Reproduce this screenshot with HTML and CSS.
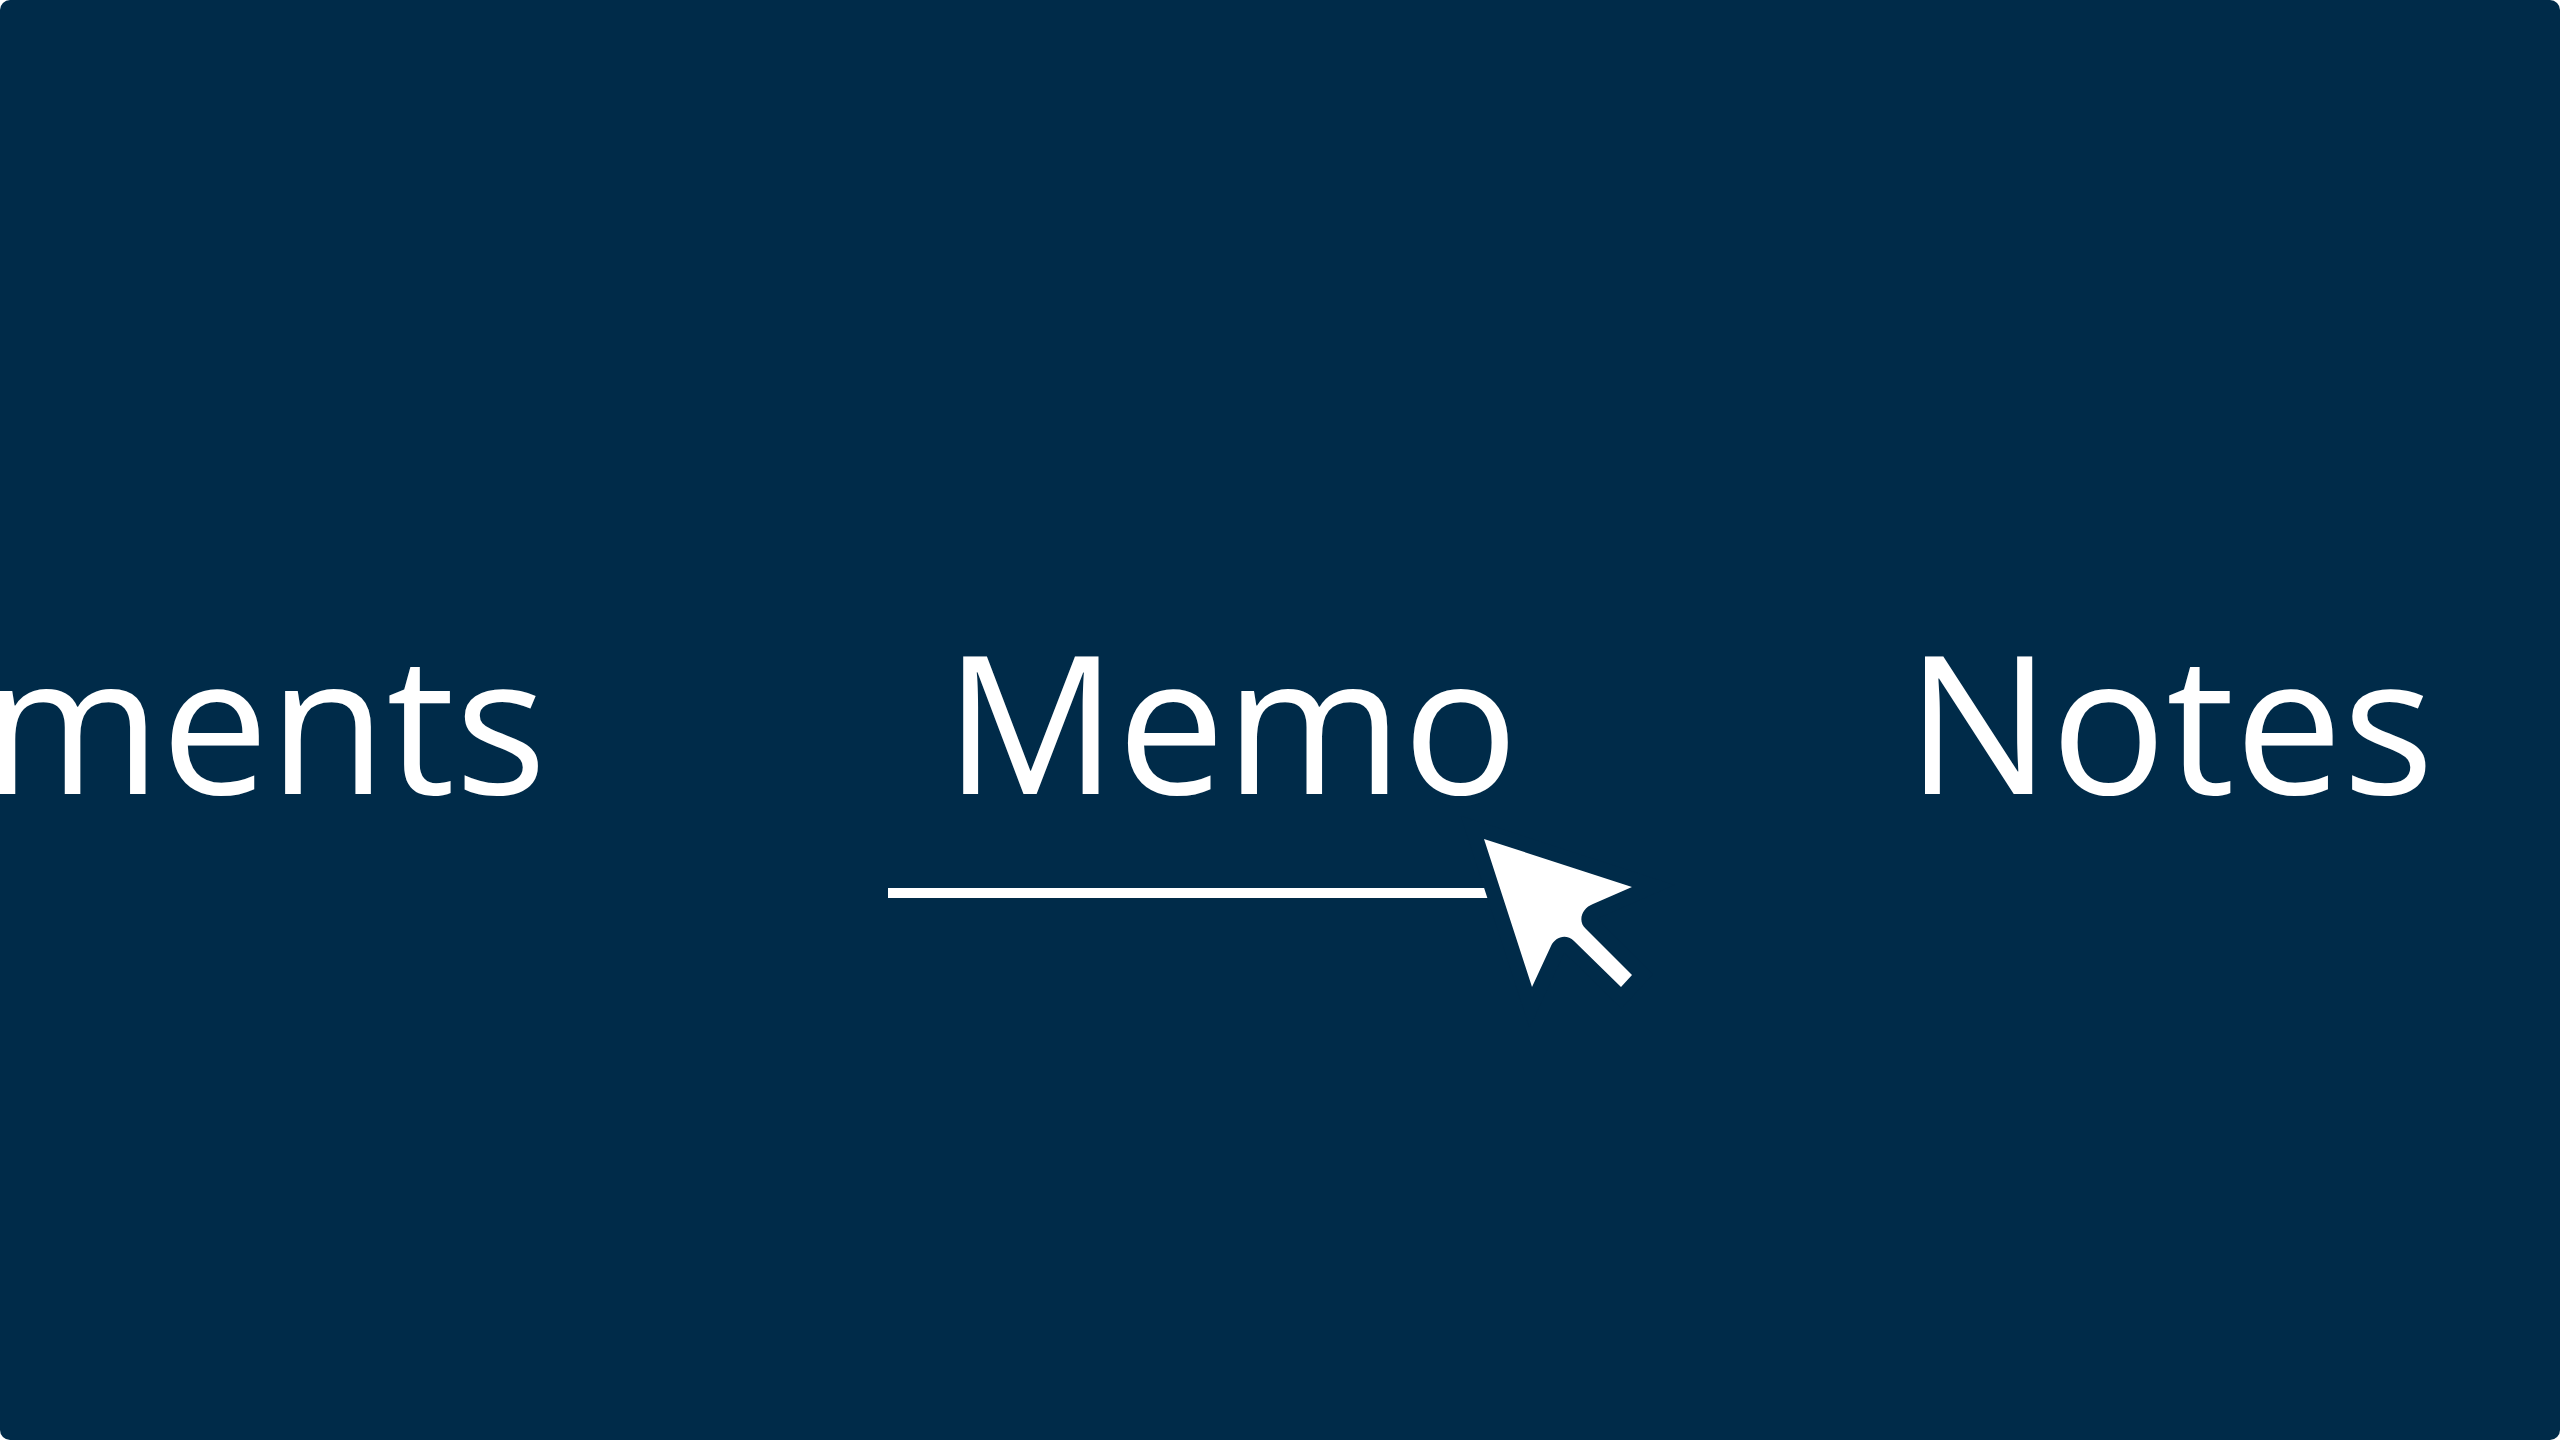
FILE: index.html
```html
<!DOCTYPE html>
<html lang="en">
<head>
    <meta charset="UTF-8">
    <meta name="viewport" content="width=device-width, initial-scale=1.0">
    <title>Memo</title>
    <link rel="stylesheet" href="styles.css">
</head>
<body>
    <nav class="tabs">
        <a href="#" class="tab previous">Documents</a>
        <a href="#" class="tab active" aria-current="page">Memo
            <svg class="cursor" viewBox="0 0 148 148" aria-hidden="true">
                <path d="M0 0 L148 48 L109 65 C98 69 93 82 102 90 L148 136 L137 148 L90 102 C82 94 71 98 67 107 L48 148 Z"/>
            </svg>
        </a>
        <a href="#" class="tab">Notes</a>
    </nav>
</body>
</html>
```

FILE: styles.css
```css
html {
    background-color: #fff;
}

body {
    margin: 0;
    background-color: #fff;
    font-family: "Open Sans", sans-serif;
}

.tabs {
    display: flex;
    justify-content: flex-end;
    align-items: center;
    gap: 276px;
    height: 100vh;
    box-sizing: border-box;
    padding-right: 70px;
    border-radius: 10px;
    background-color: #002b49;
    overflow: hidden;
}

.tab {
    position: relative;
    padding: 72px 56px;
    border-top: 10px solid transparent;
    border-bottom: 10px solid transparent;
    color: #fff;
    font-size: 192px;
    line-height: 192px;
    text-decoration: none;
    white-space: nowrap;
}

.tab.previous {
    margin-right: 10px;
}

.tab.active {
    border-bottom-color: #fff;
}

/* pointer over the end of the underline */
.cursor {
    position: absolute;
    right: -58px;
    bottom: -99px;
    width: 148px;
    height: 148px;
    overflow: visible;
    fill: #fff;
    stroke: #002b49;
    stroke-width: 30px;
    paint-order: stroke;
}
```
